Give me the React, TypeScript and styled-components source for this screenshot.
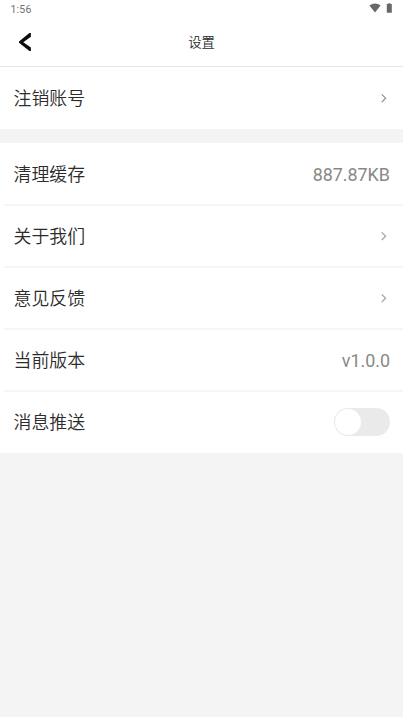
import React from "react";
import styled, { createGlobalStyle } from "styled-components";

const GlobalStyle = createGlobalStyle`
  * { box-sizing: border-box; }
  html, body { margin: 0; background: #f4f4f4; }
  body { font-family: Roboto, "Noto Sans CJK SC", sans-serif; }
`;

const Screen = styled.div`
  display: flex;
  flex-direction: column;
  min-height: 100vh;
  background: #f4f4f4;
`;

const StatusBar = styled.div`
  height: 18px;
  padding: 0 10px 0 10.5px;
  display: flex;
  align-items: center;
  justify-content: space-between;
  background: #fff;
  color: #707070;
  font-size: 10.5px;
  letter-spacing: 0.2px;
`;

const StatusIcons = styled.div`
  display: flex;
  align-items: center;
  gap: 5px;
  height: 16px;
  margin-bottom: 2px;
`;

const Header = styled.header`
  height: 49px;
  display: grid;
  grid-template-columns: 50px 1fr 50px;
  align-items: center;
  background: #fff;
  border-bottom: 1px solid #e6e6e6;
`;

const BackButton = styled.button`
  height: 48px;
  padding: 0 0 0 18px;
  border: 0;
  background: none;
  display: flex;
  align-items: center;
`;

const Title = styled.h1`
  margin: 0;
  padding-top: 2px;
  text-align: center;
  font-size: 13.3px;
  line-height: 20px;
  font-weight: 350;
  color: #2c2c2c;
`;

const Group = styled.section`
  background: #fff;
  & + & { margin-top: 14px; }
`;

const Row = styled.div`
  height: 62px;
  padding: 0 13px 0 9.5px;
  margin-left: 4px;
  display: flex;
  align-items: center;
  justify-content: space-between;
  &:not(:last-child) { box-shadow: 0 1px 0 #f5f5f5, inset 0 -1px 0 #f5f5f5; }
`;

const Label = styled.span`
  padding-top: 1px;
  font-size: 17.9px;
  line-height: 26px;
  font-weight: 350;
  color: #2c2c2c;
`;

const Value = styled.span`
  font-size: 17.9px;
  line-height: 26px;
  color: #888;
  padding-top: 2px;
`;

const Toggle = styled.span`
  width: 56px;
  height: 28px;
  border-radius: 14px;
  background: #eaeaea;
  padding: 0.6px;
  display: flex;
`;

const Knob = styled.span`
  width: 26.8px;
  height: 26.8px;
  border-radius: 50%;
  background: #fff;
`;

const Arrow = ({ color = "#999" }: { color?: string }) => (
  <svg width="10" height="10" viewBox="0 0 10 10" fill="none" stroke={color} strokeWidth="1.1">
    <path d="M1.7 1.3 5.6 5.2 1.7 9.1" />
  </svg>
);

export default function App() {
  return (
    <>
      <GlobalStyle />
      <Screen>
        <StatusBar>
          <span>1:56</span>
          <StatusIcons>
            <svg width="12" height="10" viewBox="0 0 12 10" fill="#686868">
              <path d="M.4 2.6Q6-1.7 11.6 2.6L6 9.6Z" />
            </svg>
            <svg width="7" height="10" viewBox="0 0 7 10" fill="#686868">
              <path d="M.8 1h1.5V.2h2V1h1.5v8.8H.8Z" />
            </svg>
          </StatusIcons>
        </StatusBar>
        <Header>
          <BackButton aria-label="返回">
            <svg width="14" height="20" viewBox="0 0 14 20" fill="#0d0d0d">
              <path d="M12.9 1v3.7L5.3 10.2l7.6 5.2V19h-1.5L1 10.8V9.6L11.4 1Z" />
            </svg>
          </BackButton>
          <Title>设置</Title>
        </Header>
        <Group>
          <Row><Label>注销账号</Label><Arrow color="#888" /></Row>
        </Group>
        <Group>
          <Row><Label>清理缓存</Label><Value>887.87KB</Value></Row>
          <Row><Label>关于我们</Label><Arrow /></Row>
          <Row><Label>意见反馈</Label><Arrow /></Row>
          <Row><Label>当前版本</Label><Value>v1.0.0</Value></Row>
          <Row><Label>消息推送</Label><Toggle role="switch" aria-checked={false}><Knob /></Toggle></Row>
        </Group>
      </Screen>
    </>
  );
}
